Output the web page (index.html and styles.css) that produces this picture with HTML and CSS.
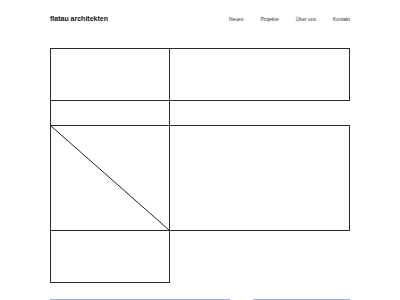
FILE: index.html
```html
<!DOCTYPE html>
<html lang="de">
<head>
<meta charset="utf-8">
<title>flatau architekten</title>
<link rel="stylesheet" href="styles.css">
</head>
<body>
<div class="page">
  <header class="header">
    <div class="logo">flatau architekten</div>
    <nav class="nav">
      <a href="#">Neues</a>
      <a href="#">Projekte</a>
      <a href="#">Über uns</a>
      <a href="#">Kontakt</a>
    </nav>
  </header>
  <main class="grid">
    <div class="col-left">
      <div class="box b1"></div>
      <div class="box b2"></div>
      <div class="box b3">
        <svg class="diag" viewBox="0 0 100 100" preserveAspectRatio="none"><line x1="0" y1="0" x2="100" y2="100" stroke="#222" stroke-width="1" vector-effect="non-scaling-stroke"/></svg>
      </div>
      <div class="box b4"></div>
    </div>
    <div class="col-right">
      <div class="box r1"></div>
      <div class="box r2"></div>
    </div>
  </main>
  <div class="footer">
    <div class="card c1"></div>
    <div class="card c2"></div>
  </div>
</div>
</body>
</html>
```

FILE: styles.css
```css
html, body {
  margin: 0;
  padding: 0;
  background: #fff;
}
body {
  font-family: "Liberation Sans", Arial, sans-serif;
}
.page {
  width: 300px;
  margin: 0 auto;
}
.header {
  height: 48px;
  display: flex;
  justify-content: space-between;
  align-items: flex-start;
  padding-top: 15px;
  box-sizing: border-box;
}
.logo {
  font-size: 7px;
  font-weight: bold;
  line-height: 8px;
  color: #111;
}
.nav {
  display: flex;
  gap: 17px;
  font-size: 5px;
  line-height: 8px;
}
.nav a {
  color: #333;
  text-decoration: none;
}
.grid {
  display: flex;
  align-items: flex-start;
}
.col-left {
  width: 120px;
  display: flex;
  flex-direction: column;
}
.col-right {
  width: 181px;
  margin-left: -1px;
  display: flex;
  flex-direction: column;
}
.box {
  box-sizing: border-box;
  border: 1px solid #2a2a2a;
  border-bottom: none;
}
.b1 { height: 52px; }
.b2 { height: 25px; }
.b3 { height: 105px; position: relative; }
.b4 { height: 53px; border-bottom: 1px solid #2a2a2a; }
.r1 { height: 53px; border-bottom: 1px solid #2a2a2a; }
.r2 { height: 106px; margin-top: 24px; border-bottom: 1px solid #2a2a2a; }
.diag {
  position: absolute;
  left: 0;
  top: 0;
  width: 100%;
  height: 100%;
  display: block;
}
.footer {
  display: flex;
  gap: 23px;
  margin-top: 16px;
}
.card {
  height: 20px;
  border-top: 2px solid #9ea6e4;
}
.c1 { width: 180px; }
.c2 { width: 97px; }
```
